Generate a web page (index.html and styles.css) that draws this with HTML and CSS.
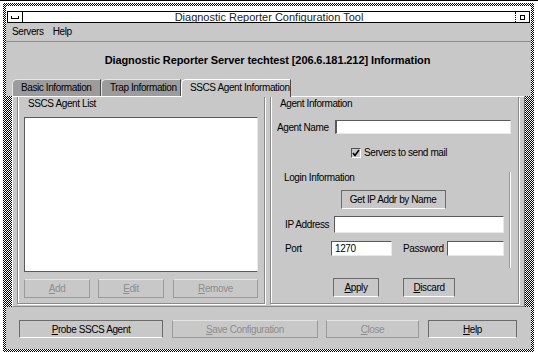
FILE: index.html
```html
<!DOCTYPE html>
<html lang="en">
<head>
  <meta charset="UTF-8" />
  <title>Diagnostic Reporter Configuration Tool</title>
  <link rel="stylesheet" href="styles.css">
</head>
<body>

  <div class="window">

    <!-- title bar -->
    <div class="titlebar">
      <div class="title-box">
        <div class="win-menu"><span class="dash"></span></div>
        <div class="title-text">Diagnostic Reporter Configuration Tool</div>
        <div class="win-close"><span class="sq"></span></div>
      </div>
    </div>

    <div class="menubar">
      <span>Servers</span>
      <span>Help</span>
    </div>

    <div class="heading">Diagnostic Reporter Server techtest [206.6.181.212] Information</div>

    <div class="tabs">
      <div class="tab">Basic Information</div>
      <div class="tab">Trap Information</div>
      <div class="tab active">SSCS Agent Information</div>
    </div>

    <div class="panel">

      <!-- agent list -->
      <div class="group list-group">
        <div class="legend">SSCS Agent List</div>
        <div class="listbox"></div>
        <div class="list-buttons">
          <button class="btn off w-add"><u>A</u>dd</button>
          <button class="btn off w-edit"><u>E</u>dit</button>
          <button class="btn off w-remove"><u>R</u>emove</button>
        </div>
      </div>

      <!-- agent info -->
      <div class="group info-group">
        <div class="legend">Agent Information</div>

        <div class="row agent-row">
          <label class="lbl lbl-agent">Agent Name</label>
          <div class="field f-agent"></div>
        </div>

        <div class="row check-row">
          <span class="checkbox">
            <svg width="8" height="8" viewBox="0 0 8 8"><path d="M1 4 L3 6.5 L7 1" fill="none" stroke="#000" stroke-width="1.6"/></svg>
          </span>
          <span>Servers to send mail</span>
        </div>

        <div class="login">
          <div class="legend">Login Information</div>
          <div class="center-row">
            <button class="btn w-getip">Get IP Addr by Name</button>
          </div>
          <div class="row ip-row">
            <label class="lbl lbl-ip">IP Address</label>
            <div class="field f-ip"></div>
          </div>
          <div class="row port-row">
            <label class="lbl lbl-port">Port</label>
            <div class="field f-port">1270</div>
            <label class="lbl lbl-pass">Password</label>
            <div class="field f-pass"></div>
          </div>
        </div>

        <div class="row apply-row">
          <button class="btn w-apply"><u>A</u>pply</button>
          <button class="btn w-discard"><u>D</u>iscard</button>
        </div>
      </div>

    </div>

    <!-- bottom actions -->
    <div class="actions">
      <button class="btn w-probe"><u>P</u>robe SSCS Agent</button>
      <button class="btn off w-save"><u>S</u>ave Configuration</button>
      <button class="btn off w-close"><u>C</u>lose</button>
      <button class="btn w-help"><u>H</u>elp</button>
    </div>

  </div>

</body>
</html>
```

FILE: styles.css
```css
body {
  margin: 0;
  padding: 0;
  background: #fff;
  border-top: 1px solid #000;
  font-family: 'Liberation Sans', Arial, sans-serif;
  font-size: 10px;
  letter-spacing: -0.4px;
  color: #000;
}

.window {
  margin: 2px 0 0 3px;
  width: 525px;
  height: 343px;
  padding: 3px;
  background: repeating-conic-gradient(#000 0 25%, #fff 0 50%) 0 0 / 2px 2px;
  display: flex;
  flex-direction: column;
}

.titlebar {
  background: #fff;
  padding: 5px 1px 0 1px;
}

.title-box {
  display: flex;
  height: 10px;
  border: 1px solid #000;
  background: #fff;
}

.win-menu {
  width: 14px;
  border-right: 1px solid #000;
  display: flex;
  align-items: center;
  justify-content: center;
}

.dash {
  width: 6px;
  height: 2px;
  border: 1px solid #000;
  border-top: none;
}

.title-text {
  flex: 1;
  text-align: center;
  font-size: 11px;
  line-height: 10px;
  letter-spacing: 0;
  color: #222;
}

.win-close {
  width: 13px;
  border-left: 1px dotted #000;
  display: flex;
  align-items: center;
  justify-content: center;
}

.sq {
  width: 3px;
  height: 3px;
  border: 1px solid #000;
}

.menubar {
  background: #c8c8c8;
  height: 18px;
  line-height: 18px;
  padding-left: 6px;
  display: flex;
  gap: 9px;
  border-bottom: 1px solid #8c8c8c;
}

.heading {
  background: #c8c8c8;
  height: 37px;
  line-height: 37px;
  text-align: center;
  font-weight: bold;
  font-size: 11px;
  letter-spacing: -0.1px;
  padding-right: 2px;
}

.tabs {
  background: #c8c8c8;
  height: 17px;
  padding-left: 6px;
  display: flex;
}

.tab {
  box-sizing: border-box;
  height: 17px;
  line-height: 16px;
  padding: 0 0 0 8px;
  background: #9c9c9c;
  border-top: 1px solid #e6e6e6;
  border-left: 1px solid #e6e6e6;
  border-right: 1px solid #4a4a4a;
  border-top-left-radius: 5px;
  width: 89px;
}

.tab:nth-child(2) {
  width: 80px;
}

.tab.active {
  background: #c8c8c8;
  border-top-color: #fff;
  border-left-color: #fff;
  width: 110px;
  height: 18px;
  margin-bottom: -1px;
  position: relative;
  z-index: 1;
}

.panel {
  background: #c8c8c8;
  display: flex;
  gap: 5px;
  height: 211px;
  padding: 0 5px 0 4px;
  margin: 0 6px;
  box-sizing: border-box;
  border-top: 1px solid #fff;
  border-left: 1px solid #fff;
  border-right: 1px solid #6a6a6a;
  border-bottom: 1px solid #8a8a8a;
}

.group {
  box-sizing: border-box;
  height: 207px;
  border: 1px solid #8a8a8a;
  border-top: none;
  box-shadow: inset 1px 0 0 #fff, 1px 1px 0 #fff;
}

.legend {
  height: 12px;
  line-height: 12px;
  padding-left: 4px;
  margin-top: 1px;
}

.list-group {
  width: 248px;
  padding: 0 5px 0 6px;
}

.listbox {
  margin-top: 7px;
  width: 234px;
  height: 155px;
  box-sizing: border-box;
  background: #fff;
  border: 1px solid #5a5a5a;
  border-right-color: #e8e8e8;
}

.list-buttons {
  margin-top: 7px;
  display: flex;
  gap: 8px;
}

.btn {
  box-sizing: border-box;
  height: 19px;
  padding: 0;
  font-family: 'Liberation Sans', Arial, sans-serif;
  font-size: 10px;
  letter-spacing: -0.4px;
  color: #000;
  background: #c8c8c8;
  border: 1px solid #6a6a6a;
  border-bottom-color: #fff;
}

.btn.off {
  color: #8e8e8e;
  border-color: #e4e4e4 #9a9a9a #9a9a9a #9a9a9a;
}

.w-add { width: 66px; }
.w-edit { width: 66px; }
.w-remove { width: 85px; margin-left: 1px; }

.info-group {
  width: 249px;
  padding: 0 7px 0 5px;
}

.row {
  display: flex;
  align-items: center;
}

.lbl {
  box-sizing: border-box;
  padding-left: 1px;
}

.field {
  box-sizing: border-box;
  background: #fff;
  border: 1px solid #e8e8e8;
  border-top-color: #5a5a5a;
  border-left-color: #5a5a5a;
  padding-left: 3px;
  line-height: 13px;
}

.agent-row {
  margin-top: 10px;
}

.lbl-agent { width: 59px; }

.f-agent {
  width: 176px;
  height: 14px;
  border-left-width: 2px;
}

.check-row {
  margin-top: 13px;
  padding-left: 75px;
  gap: 3px;
}

.checkbox {
  box-sizing: border-box;
  width: 10px;
  height: 10px;
  border: 1px solid #fff;
  border-top-color: #555;
  border-left-color: #555;
  background: #c8c8c8;
  display: flex;
  align-items: center;
  justify-content: center;
}

.login {
  margin: 14px 0 0 2px;
  width: 232px;
  height: 96px;
  box-sizing: border-box;
  border-right: 1px solid #9a9a9a;
  box-shadow: 1px 0 0 #fff;
}

.login .legend {
  padding-left: 6px;
  margin-top: 0;
}

.center-row {
  margin-top: 6px;
  display: flex;
  justify-content: center;
  padding-right: 1px;
}

.w-getip { width: 105px; }

.ip-row {
  margin-top: 7px;
  padding-left: 6px;
}

.lbl-ip { width: 50px; }

.f-ip {
  width: 170px;
  height: 17px;
}

.port-row {
  margin-top: 8px;
  padding-left: 6px;
}

.lbl-port { width: 47px; }

.f-port {
  width: 61px;
  height: 15px;
}

.lbl-pass {
  width: 45px;
  margin-left: 10px;
}

.f-pass {
  width: 57px;
  height: 15px;
}

.apply-row {
  margin-top: 10px;
  padding-left: 57px;
  gap: 24px;
}

.w-apply { width: 46px; }
.w-discard { width: 52px; }

.actions {
  flex: 1;
  background: #c8c8c8;
  display: flex;
  padding: 13px 0 0 13px;
  gap: 9px;
}

.actions .btn {
  height: 18px;
}

.w-probe { width: 144px; }
.w-save { width: 146px; }
.w-close { width: 93px; margin-left: -1px; }
.w-help { width: 89px; }
```
